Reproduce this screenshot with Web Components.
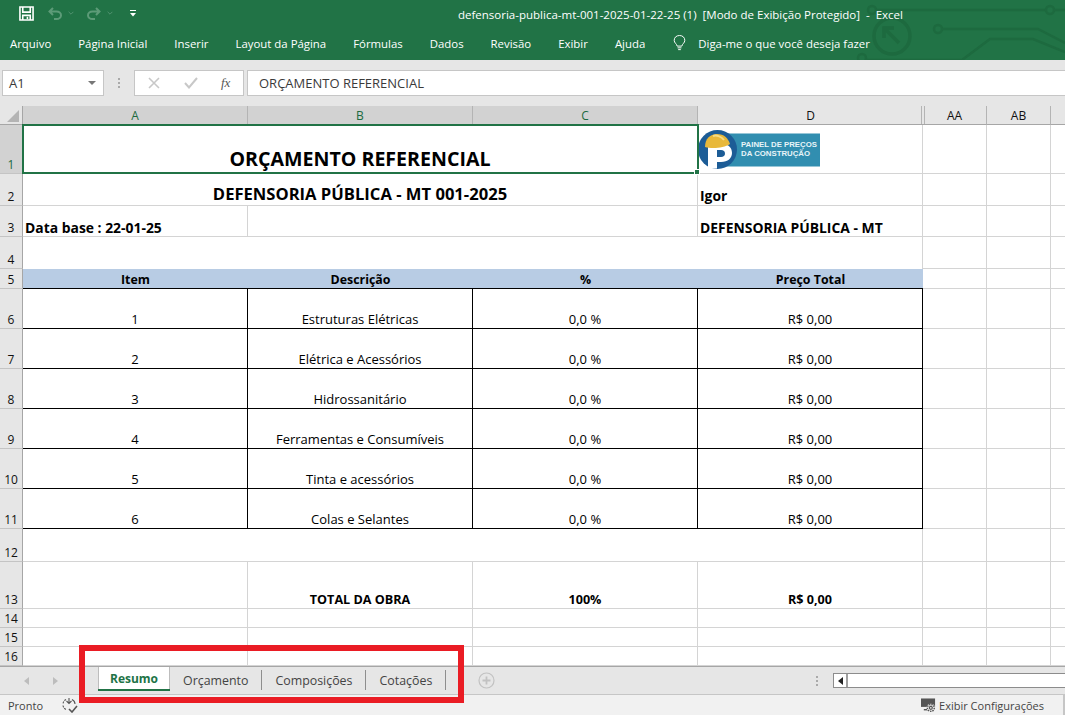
<!DOCTYPE html>
<html lang="pt-BR">
<head>
<meta charset="utf-8">
<title>Excel</title>
<style>
    html, body { margin: 0; height: 715px; overflow: hidden; }
    body { display: flex; flex-direction: column; position: relative; font-family: "Open Sans", "Liberation Sans", sans-serif; background: #fff; }
</style>
</head>
<body>
<xl-titlebar>defensoria-publica-mt-001-2025-01-22-25 (1)&nbsp; [Modo de Exibição Protegido]&nbsp; -&nbsp; Excel</xl-titlebar>
<xl-formula-bar cell="A1" value="ORÇAMENTO REFERENCIAL"></xl-formula-bar>
<xl-sheet></xl-sheet>
<xl-tabs></xl-tabs>
<xl-status></xl-status>
<xl-highlight></xl-highlight>

<script>
// Title bar + ribbon tabs
class XlTitlebar extends HTMLElement {
    constructor() {
        super();
        this.attachShadow({ mode: 'open' });
    }

    connectedCallback() {
        const tabs = ['Arquivo', 'Página Inicial', 'Inserir', 'Layout da Página', 'Fórmulas', 'Dados', 'Revisão', 'Exibir', 'Ajuda'];
        this.shadowRoot.innerHTML = /*html*/ `
            <style>
                :host { display: block; height: 60px; background: #217346; color: #fff; position: relative; overflow: hidden; flex: none; }
                .top { height: 30px; display: flex; align-items: center; position: relative; }
                .qat { display: flex; align-items: center; padding-left: 19px; width: 439px; margin-top: -4px; }
                .title { font-size: 11.5px; white-space: nowrap; color: #fff; margin-top: -2px; }
                .menu { height: 30px; display: flex; align-items: center; gap: 27px; padding-left: 10px; font-size: 11.4px; position: relative; margin-top: -2px; }
                .menu span { white-space: nowrap; }
                .tell { display: flex; align-items: center; gap: 11px; }
                svg.circuit { position: absolute; right: 0; top: 0; }
                svg { display: block; flex: none; }
            </style>
            <svg class="circuit" width="235" height="60" viewBox="830 0 235 60" fill="none" stroke="#1d6a3f" stroke-width="2.5">
                <circle cx="872" cy="10" r="4"/>
                <path d="M876 10H1046"/>
                <circle cx="1050" cy="10" r="4"/>
                <path d="M1054 10H1065"/>
                <circle cx="892" cy="36" r="18" stroke-width="3.5"/>
                <path d="M899 43L884 28M884 38V28H894" stroke-width="3.5"/>
                <circle cx="938" cy="29" r="4"/>
                <path d="M942 29H1038L1065 43"/>
                <circle cx="862" cy="58" r="4"/>
                <path d="M866 60H962L990 39H1033L1065 52"/>
            </svg>
            <div class="top">
                <div class="qat">
                    <svg width="15" height="15" viewBox="0 0 16 16" fill="none" stroke="#fff" stroke-width="1.7">
                        <path d="M1 1H15V15H1Z"/>
                        <path d="M4 1V6.500H12V1" />
                        <path d="M4 15V10H12V15" />
                        <path d="M9 11.500V14" />
                    </svg>
                    <svg style="margin-left:14px" width="14" height="13" viewBox="0 0 14 13" fill="none" stroke="#5d9b78" stroke-width="2">
                        <path d="M5 1L1.500 4.500L5 8M1.500 4.500H8.500C11 4.500 13 6 13 8.200C13 10.500 11 12 8.500 12H6"/>
                    </svg>
                    <svg style="margin-left:6px" width="6" height="4" viewBox="0 0 7 5" fill="none" stroke="#5d9b78"><path d="M.5 1L3.500 4L6.500 1"/></svg>
                    <svg style="margin-left:13px" width="14" height="13" viewBox="0 0 14 13" fill="none" stroke="#5d9b78" stroke-width="2">
                        <path d="M9 1L12.500 4.500L9 8M12.500 4.500H5.500C3 4.500 1 6 1 8.200C1 10.500 3 12 5.500 12H8"/>
                    </svg>
                    <svg style="margin-left:6px" width="6" height="4" viewBox="0 0 7 5" fill="none" stroke="#5d9b78"><path d="M.5 1L3.500 4L6.500 1"/></svg>
                    <svg style="margin-left:17px" width="6" height="7" viewBox="0 0 6 7" fill="#fff"><rect y="0" width="6" height="1"/><path d="M0 3H6L3 6.500Z"/></svg>
                </div>
                <span class="title"><slot></slot></span>
            </div>
            <div class="menu">
                ${tabs.map((t) => `<span>${t}</span>`).join('')}
                <div class="tell">
                    <svg width="15" height="18" viewBox="0 0 17 19" fill="none" stroke="#fff" stroke-width="1.1">
                        <path d="M5.800 13C5.500 10.500 2.500 9.500 2.500 6.500C2.500 3.200 5 1 8.500 1C12 1 14.500 3.200 14.500 6.500C14.500 9.500 11.500 10.500 11.200 13Z"/>
                        <path d="M6.300 15H10.700M7 17H10"/>
                    </svg>
                    <span>Diga-me o que você deseja fazer</span>
                </div>
            </div>
        `;
    }
}
customElements.define('xl-titlebar', XlTitlebar);

// Name box and formula input
class XlFormulaBar extends HTMLElement {
    constructor() {
        super();
        this.attachShadow({ mode: 'open' });
    }

    connectedCallback() {
        const cell = this.getAttribute('cell') || '';
        const value = this.getAttribute('value') || '';
        this.shadowRoot.innerHTML = /*html*/ `
            <style>
                :host { display: flex; height: 46px; flex: none; background: #e6e6e6; padding: 10px 0 10px 2px; box-sizing: border-box; align-items: stretch; font-size: 13px; color: #3a3a3a; }
                .box { background: #fff; border: 1px solid #c6c6c6; box-sizing: border-box; display: flex; align-items: center; }
                .name { width: 102px; padding: 0 7px 0 6px; justify-content: space-between; }
                .grip { width: 30px; display: flex; flex-direction: column; align-items: center; justify-content: center; gap: 2px; }
                .grip i { width: 2px; height: 2px; background: #aaa; display: block; }
                .btns { width: 110px; padding-left: 13px; gap: 24px; }
                .fx { font: italic 13px "Liberation Serif", serif; color: #555; margin-left: -1px; }
                .input { flex: 1; margin-left: 3px; padding-left: 11px; border-right: none; }
            </style>
            <div class="box name">
                <span>${cell}</span>
                <svg width="8" height="4" viewBox="0 0 8 4" fill="#777"><path d="M0 0H8L4 4Z"/></svg>
            </div>
            <div class="grip"><i></i><i></i><i></i></div>
            <div class="box btns">
                <svg width="12" height="12" viewBox="0 0 12 12" stroke="#c8c8c8" stroke-width="1.6" fill="none"><path d="M1 1L11 11M11 1L1 11"/></svg>
                <svg width="14" height="12" viewBox="0 0 14 12" stroke="#c8c8c8" stroke-width="2" fill="none"><path d="M1 6L5 10.500L13 1"/></svg>
                <span class="fx">fx</span>
            </div>
            <div class="box input">${value}</div>
        `;
    }
}
customElements.define('xl-formula-bar', XlFormulaBar);

// Worksheet grid
class XlSheet extends HTMLElement {
    constructor() {
        super();
        this.attachShadow({ mode: 'open' });
    }

    connectedCallback() {
        const heights = [19, 49, 32, 31, 32, 20, 40, 40, 40, 40, 40, 40, 33, 47, 19, 19, 19];
        const cols = ['A', 'B', 'C', 'D', 'AA', 'AB'];
        const items = [
            ['1', 'Estruturas Elétricas'],
            ['2', 'Elétrica e Acessórios'],
            ['3', 'Hidrossanitário'],
            ['4', 'Ferramentas e Consumíveis'],
            ['5', 'Tinta e acessórios'],
            ['6', 'Colas e Selantes']
        ];

        const cell = (row, col, span, cls, text) =>
            `<div class="c ${cls}" style="grid-row:${row + 1};grid-column:${col + 2} / span ${span}">${text || ''}</div>`;
        const blank = (row) => cell(row, 4, 1, '') + cell(row, 5, 1, '') + cell(row, 6, 1, 'last');

        let html = `<div class="corner" style="grid-row:1;grid-column:1"><svg width="12" height="12" viewBox="0 0 12 12"><path d="M12 0V12H0Z" fill="#b4b4b4"/></svg></div>`;
        cols.forEach((c, i) => {
            const cls = i < 3 ? 'sel' : i === 3 ? 'hide-r' : i === 4 ? 'hide-l' : '';
            html += `<div class="ch ${cls}" style="grid-row:1;grid-column:${i + 2}">${c}</div>`;
        });
        html += `<div class="ch end" style="grid-row:1;grid-column:8"></div>`;
        for (let r = 1; r <= 16; r++) {
            html += `<div class="rh ${r === 1 ? 'sel' : ''}" style="grid-row:${r + 1};grid-column:1">${r}</div>`;
        }

        html += cell(1, 0, 3, 'title active', 'ORÇAMENTO REFERENCIAL<i class="handle"></i>');
        html += cell(1, 3, 1, 'logo', XlSheet.logo());
        html += cell(2, 0, 3, 'sub', 'DEFENSORIA PÚBLICA - MT 001-2025');
        html += cell(2, 3, 1, 'big left up', 'Igor');
        html += cell(3, 0, 1, 'big left', 'Data base : 22-01-25');
        html += cell(3, 1, 2, '');
        html += cell(3, 3, 1, 'big left', 'DEFENSORIA PÚBLICA - MT');
        html += cell(4, 0, 4, 'nob');
        ['Item', 'Descrição', '%', 'Preço Total'].forEach((t, i) => {
            html += cell(5, i, 1, 'head', t);
        });
        items.forEach(([n, desc], i) => {
            const r = 6 + i;
            html += cell(r, 0, 1, 'box', n) + cell(r, 1, 1, 'box', desc) + cell(r, 2, 1, 'box', '0,0 %') + cell(r, 3, 1, 'box', 'R$ 0,00');
        });
        html += cell(12, 0, 4, '');
        html += cell(13, 0, 1, '');
        html += cell(13, 1, 1, 'b', 'TOTAL DA OBRA');
        html += cell(13, 2, 1, 'b', '100%');
        html += cell(13, 3, 1, 'b', 'R$ 0,00');
        for (let r = 14; r <= 16; r++) {
            for (let c = 0; c < 4; c++) html += cell(r, c, 1, '');
        }
        for (let r = 1; r <= 16; r++) html += blank(r);

        this.shadowRoot.innerHTML = /*html*/ `
            <style>
                :host { display: block; flex: none; height: 560px; background: #fff; }
                .grid {
                    display: grid;
                    grid-template-columns: 23px 225px 225px 225px 225px 64px 64px 14px;
                    grid-template-rows: ${heights.map((h) => h + 'px').join(' ')};
                    font-size: 13px;
                    color: #000;
                }
                .c { box-sizing: border-box; border-right: 1px solid #d4d4d4; border-bottom: 1px solid #d4d4d4; display: flex; align-items: flex-end; justify-content: center; white-space: nowrap; line-height: 17px; position: relative; }
                .last { border-right: none; }
                .nob { border-bottom: none; }
                .ch, .rh, .corner { box-sizing: border-box; background: #e6e6e6; color: #111; font-size: 12px; display: flex; justify-content: center; position: relative; }
                .ch { align-items: center; border-right: 1px solid #b4b4b4; border-bottom: 1px solid #a6a6a6; }
                .ch.end { border-right: none; }
                .rh { align-items: flex-end; line-height: 17px; border-right: 1px solid #a6a6a6; border-bottom: 1px solid #c4c4c4; }
                .corner { align-items: flex-end; justify-content: flex-end; padding: 0 3px 2px 0; border-right: 1px solid #a6a6a6; border-bottom: 1px solid #a6a6a6; }
                .sel { background: #d2d2d2; color: #1c6a40; }
                .ch.sel { border-bottom-color: #217346; }
                .rh.sel { border-right-color: #217346; }
                .hide-r { border-right: none; }
                .hide-r::before { content: ""; position: absolute; right: 1px; top: 0; bottom: 0; width: 1px; background: #b4b4b4; }
                .hide-l::before { content: ""; position: absolute; left: 1px; top: 0; bottom: 0; width: 1px; background: #b4b4b4; }
                .b { font-weight: 700; font-size: 12.6px; }
                .big { font-weight: 700; font-size: 13.9px; }
                .up { padding-bottom: 1px; }
                .left { justify-content: flex-start; padding-left: 2px; overflow: visible; }
                .title { font-weight: 700; font-size: 19.6px; line-height: 28px; }
                .sub { font-weight: 700; font-size: 16.6px; line-height: 22px; }
                .active { border-color: transparent; z-index: 2; }
                .active::after { content: ""; position: absolute; left: -1px; top: -1px; right: -2px; bottom: -1px; border: 2px solid #217346; }
                .handle { position: absolute; right: -3px; bottom: -2px; z-index: 1; width: 4px; height: 4px; background: #217346; border: 1px solid #fff; }
                .head { background: #b8cce4; font-weight: 700; font-size: 12.4px; border-right: none; border-bottom: 1px solid #000; }
                .box { border-right: 1px solid #000; border-bottom: 1px solid #000; }
                .logo { align-items: flex-start; justify-content: flex-start; padding-top: 5px; }
            </style>
            <div class="grid">${html}</div>
        `;
    }

    static logo() {
        return `
            <svg width="124" height="42" viewBox="0 0 124 42" style="display:block">
                <rect x="20" y="3.500" width="102" height="33" fill="#318eb0"/>
                <circle cx="19.500" cy="19.500" r="19.500" fill="#1c5c96"/>
                <path d="M10 38.500V14H24C31 14 34 18 34 23C34 28 30 32 23 32H19V38.500Z" fill="#fff"/>
                <path d="M19 20H23C25.500 20 27 21.500 27 23.500C27 25.500 25.500 27 23 27H19Z" fill="#1c5c96"/>
                <path d="M7 17C7 9 12 4 19 4C26 4 30 8 32 14C26 18 14 19 7 17Z" fill="#e8b83a"/>
                <path d="M15 6C18 5 23 6 26 10" stroke="#f6dc83" stroke-width="2" fill="none"/>
                <text x="43" y="16.500" font-family="Liberation Sans, sans-serif" font-weight="700" font-size="7.800" fill="#e8f4f8">PAINEL DE PREÇOS</text>
                <text x="43" y="26" font-family="Liberation Sans, sans-serif" font-weight="700" font-size="7.800" fill="#e8f4f8">DA CONSTRUÇÃO</text>
            </svg>`;
    }
}
customElements.define('xl-sheet', XlSheet);

// Sheet tabs
class XlTabs extends HTMLElement {
    constructor() {
        super();
        this.attachShadow({ mode: 'open' });
    }

    connectedCallback() {
        this.shadowRoot.innerHTML = /*html*/ `
            <style>
                :host { display: flex; flex: none; height: 29px; box-sizing: border-box; background: #e6e6e6; border-top: 1px solid #a6a6a6; border-bottom: 1px solid #c6c6c6; font-size: 12.4px; color: #444; align-items: flex-start; }
                .nav { width: 98px; height: 27px; display: flex; align-items: center; padding-left: 24px; gap: 24px; box-sizing: border-box; }
                .tab { height: 24px; display: flex; align-items: center; padding: 0 13px; white-space: nowrap; box-sizing: border-box; position: relative; }
                .tab + .tab { border-right: 1px solid #8e8e8e; height: 20px; margin-top: 3px; }
                .tab.on { background: #fff; color: #217346; font-size: 12px; font-weight: 700; border: solid #bdbdbd; border-width: 0 1px; padding: 0 11px 1px; width: 72px; justify-content: center; }
                .tab.on::after { content: ""; position: absolute; left: -1px; right: -1px; bottom: 0; height: 2px; background: #217346; }
                .plus { margin-left: 32px; margin-top: 5px; }
                .spacer { flex: 1; }
                .grip { display: flex; flex-direction: column; gap: 2px; margin: 9px 15px 0 0; }
                .grip i { width: 2px; height: 2px; background: #aaa; display: block; }
                .scroll { width: 232px; height: 15px; margin-top: 6px; background: #fff; border: 1px solid #8c8c8c; border-right: none; box-sizing: border-box; display: flex; }
                .arrow { width: 14px; border-right: 2px solid #a0a0a0; display: flex; align-items: center; justify-content: center; box-sizing: border-box; }
                svg { display: block; flex: none; }
            </style>
            <div class="nav">
                <svg width="5" height="8" viewBox="0 0 5 8" fill="#bdbdbd"><path d="M5 0V8L0 4Z"/></svg>
                <svg width="5" height="8" viewBox="0 0 5 8" fill="#bdbdbd"><path d="M0 0V8L5 4Z"/></svg>
            </div>
            <div class="tab on">Resumo</div>
            <div class="tab">Orçamento</div>
            <div class="tab">Composições</div>
            <div class="tab">Cotações</div>
            <svg class="plus" width="17" height="17" viewBox="0 0 17 17" fill="none" stroke="#c2c2c2" stroke-width="1.2">
                <circle cx="8.500" cy="8.500" r="7.500"/>
                <path d="M8.500 4.500V12.500M4.500 8.500H12.500" stroke-width="1.800"/>
            </svg>
            <div class="spacer"></div>
            <div class="grip"><i></i><i></i><i></i></div>
            <div class="scroll">
                <div class="arrow"><svg width="5" height="8" viewBox="0 0 5 8" fill="#222"><path d="M5 0V8L0 4Z"/></svg></div>
            </div>
        `;
    }
}
customElements.define('xl-tabs', XlTabs);

// Status bar
class XlStatus extends HTMLElement {
    constructor() {
        super();
        this.attachShadow({ mode: 'open' });
    }

    connectedCallback() {
        this.shadowRoot.innerHTML = /*html*/ `
            <style>
                :host { display: flex; flex: none; height: 20px; background: #f1f1f1; font-size: 11px; color: #444; align-items: center; padding-left: 8px; box-sizing: border-box; }
                .macro { margin-left: 18px; }
                .spacer { flex: 1; }
                .view { display: flex; align-items: center; gap: 3px; padding-right: 19px; border-right: 2px solid #c6c6c6; height: 20px; white-space: nowrap; }
                svg { display: block; flex: none; }
            </style>
            <span>Pronto</span>
            <svg class="macro" width="17" height="16" viewBox="0 0 17 16" fill="none" stroke="#555" stroke-width="1.100">
                <path d="M5 2.500A5.500 5.500 0 0 0 2 7.500M2 8.500A5 5 0 0 0 5 12.500" stroke-dasharray="2 1"/>
                <path d="M8 1V6M5.500 4L8 6.500L10.500 4M11 2.500C13 3.500 14 5 14 7"/>
                <path d="M8 12L11 15L16 9" stroke-width="1.600"/>
            </svg>
            <div class="spacer"></div>
            <div class="view">
                <svg width="15" height="15" viewBox="0 0 16 15">
                    <path d="M0 0H15V9H0Z" fill="#555"/>
                    <path d="M3 12H8" stroke="#555" stroke-width="1.500"/>
                    <circle cx="10.500" cy="10" r="4.500" fill="#f1f1f1"/>
                    <circle cx="10.500" cy="10" r="3.700" fill="none" stroke="#555" stroke-width="1.600" stroke-dasharray="1.500 1"/>
                    <circle cx="10.500" cy="10" r="2.200" fill="#555"/>
                    <circle cx="10.500" cy="10" r=".9" fill="#f1f1f1"/>
                </svg>
                <span>Exibir Configurações</span>
            </div>
        `;
    }
}
customElements.define('xl-status', XlStatus);

// Red annotation box drawn over the screenshot
class XlHighlight extends HTMLElement {
    constructor() {
        super();
        this.attachShadow({ mode: 'open' });
    }

    connectedCallback() {
        this.shadowRoot.innerHTML = /*html*/ `
            <style>
                :host { position: absolute; left: 79px; top: 645px; width: 385px; height: 58px; box-sizing: border-box; border: 6px solid #ea1c24; pointer-events: none; }
            </style>
        `;
    }
}
customElements.define('xl-highlight', XlHighlight);
</script>
</body>
</html>
